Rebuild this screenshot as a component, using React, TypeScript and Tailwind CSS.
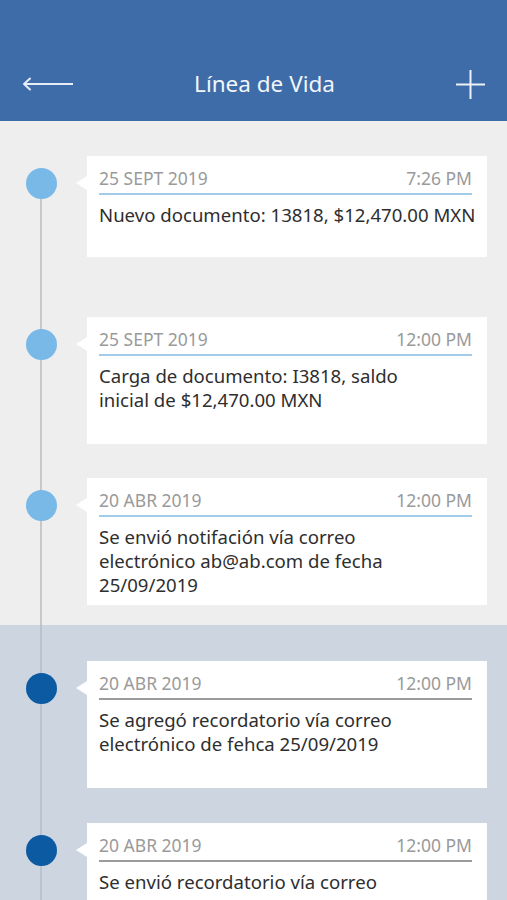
import React from "react";

type Item = {
  date: string;
  time: string;
  lines: string[];
  h: string;
  dark?: boolean;
};

const groupA: Item[] = [
  { date: "25 SEPT 2019", time: "7:26 PM", lines: ["Nuevo documento: 13818, $12,470.00 MXN"], h: "h-[101px]" },
  { date: "25 SEPT 2019", time: "12:00 PM", lines: ["Carga de documento: I3818, saldo", "inicial de $12,470.00 MXN"], h: "h-[127px]" },
  {
    date: "20 ABR 2019",
    time: "12:00 PM",
    lines: ["Se envió notifación vía correo", "electrónico ab@ab.com de fecha", "25/09/2019"],
    h: "h-[127px]",
  },
];

const groupB: Item[] = [
  {
    date: "20 ABR 2019",
    time: "12:00 PM",
    lines: ["Se agregó recordatorio vía correo", "electrónico de fehca 25/09/2019"],
    h: "h-[127px]",
    dark: true,
  },
  {
    date: "20 ABR 2019",
    time: "12:00 PM",
    lines: ["Se envió recordatorio vía correo"],
    h: "h-[127px]",
    dark: true,
  },
];

function Row({ item, className }: { item: Item; className?: string }) {
  return (
    <div className={"flex " + (className ?? "")}>
      <div className="w-[87px] shrink-0 relative">
        <div
          className={
            "ml-[26px] mt-[12px] w-[31px] h-[31px] rounded-full relative z-10 " +
            (item.dark ? "bg-[#0b5aa2]" : "bg-[#79b9e7]")
          }
        />
      </div>
      <div className={"relative w-[400px] bg-white pl-[12px] pr-[15px] pt-[11px] " + item.h}>
        <div className="absolute left-[-11px] top-[20px] w-0 h-0 border-y-[7px] border-y-transparent border-r-[11px] border-r-white" />
        <div
          className={
            "flex justify-between text-[17.5px] leading-[23px] text-[#9a9a9a] pb-[3px] border-b-2 " +
            (item.dark ? "border-[#9b9b9b]" : "border-[#a3cceb]")
          }
        >
          <span>{item.date}</span>
          <span>{item.time}</span>
        </div>
        <div className="mt-[8px] mr-[-6px] text-[18.6px] leading-[24px] text-[#2e2e2e]">
          {item.lines.map((l, i) => (
            <div key={i} className="whitespace-nowrap">
              {l}
            </div>
          ))}
        </div>
      </div>
    </div>
  );
}

export default function App() {
  return (
    <div
      className="w-[507px] h-[900px] overflow-hidden bg-[#cdd5e0]"
      style={{ fontFamily: '"Noto Sans", "Open Sans", sans-serif' }}
    >
      <header className="h-[121px] bg-[#3d6ca8] pt-[60px]">
        <div className="h-[48px] px-[22px] flex items-center justify-between">
          <svg width="52" height="14" viewBox="0 0 52 14" className="text-[#e6edf6]">
            <path d="M2 7 H51" stroke="currentColor" strokeWidth="2" fill="none" />
            <path d="M8 1.5 L2 7 L8 12.5" stroke="currentColor" strokeWidth="2" fill="none" strokeLinecap="round" strokeLinejoin="round" />
          </svg>
          <h1 className="text-[22.5px] leading-[28px] text-[#f2f5fa] font-normal">Línea de Vida</h1>
          <svg width="31" height="31" viewBox="0 0 31 31" className="text-[#eef2f8] mr-[-1px]">
            <path d="M15.5 1 V30 M1 15.5 H30" stroke="currentColor" strokeWidth="2" fill="none" />
          </svg>
        </div>
      </header>
      <section className="relative bg-[#eeeeee] pt-[35px] pb-[20px]">
        <div className="absolute left-[40px] top-[70px] bottom-0 w-[2px] bg-[#c8c8c8]" />
        <Row item={groupA[0]} className="mb-[60px]" />
        <Row item={groupA[1]} className="mb-[34px]" />
        <Row item={groupA[2]} />
      </section>
      <section className="relative pt-[36px]">
        <div className="absolute left-[40px] top-0 bottom-0 w-[2px] bg-[#bcc2cb]" />
        <Row item={groupB[0]} className="mb-[35px]" />
        <Row item={groupB[1]} />
      </section>
    </div>
  );
}
